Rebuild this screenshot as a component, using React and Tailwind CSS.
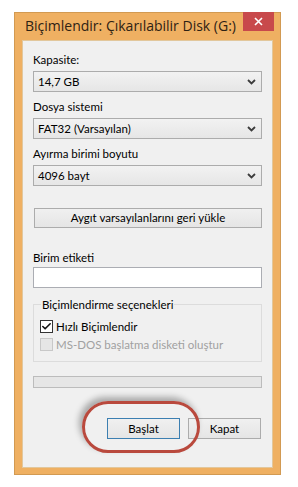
import { Check } from "lucide-react";

const FONT = { fontFamily: 'Lato, "Open Sans", "Liberation Sans", sans-serif' };

const Chevron = () => (
  <svg width="9" height="6" viewBox="0 0 9 6" className="shrink-0">
    <polyline points="1,1 4.5,4.5 8,1" fill="none" stroke="#3c3c3c" strokeWidth="1.8" />
  </svg>
);

const Select = ({ value }) => (
  <div className="h-[21px] flex items-center justify-between border border-[#acacac] bg-gradient-to-b from-[#f2f2f2] to-[#e6e6e6] pl-[4px] pr-[5px]">
    <span>{value}</span>
    <Chevron />
  </div>
);

const Label = ({ children, className = "" }) => (
  <div className={`h-[15px] leading-[15px] ${className}`}>{children}</div>
);

const Btn = ({ children, primary }) => (
  <div
    className={`w-[73px] h-[21px] flex items-center justify-center border bg-gradient-to-b from-[#f0f0f0] to-[#e5e5e5] ${
      primary ? "border-[#3c7fb1]" : "border-[#acacac]"
    }`}
  >
    {children}
  </div>
);

export default function App() {
  return (
    <div className="w-[298px] h-[487px] bg-white pt-[12px] pl-[14px] text-[11.5px] text-black" style={FONT}>
      {/* Window frame */}
      <div className="w-[267px] h-[463px] bg-[#efb062] border border-[#d29a52] flex flex-col">
        {/* Title bar */}
        <div className="h-[27px] flex items-start justify-between">
          <div className="pl-[10px] pt-[4px] text-[14px] leading-[18px] text-[#2e2214] whitespace-nowrap font-['Open_Sans']">
            Biçimlendir: Çıkarılabilir Disk (G:)
          </div>
          <div className="w-[31px] h-[19px] mt-[-1px] mr-[6px] bg-[#c8494b] flex items-center justify-center">
            <svg width="9" height="9" viewBox="0 0 9 9">
              <path d="M1 1 L8 8 M8 1 L1 8" stroke="#fff" strokeWidth="1.6" />
            </svg>
          </div>
        </div>

        {/* Client area */}
        <div className="mx-[7px] h-[428px] bg-[#f0f0f0] border border-[#e2c79c] flex flex-col">
          <div className="px-[10px] pt-[11px] flex flex-col">
            <Label>Kapasite:</Label>
            <div className="mt-[4px]"><Select value="14,7 GB" /></div>

            <Label className="mt-[7px]">Dosya sistemi</Label>
            <div className="mt-[4px]"><Select value="FAT32 (Varsayılan)" /></div>

            <Label className="mt-[7px]">Ayırma birimi boyutu</Label>
            <div className="mt-[4px]"><Select value="4096 bayt" /></div>

            <div className="mt-[22px] ml-[1px] h-[20px] flex items-center justify-center border border-[#acacac] bg-gradient-to-b from-[#f0f0f0] to-[#e5e5e5]">
              Aygıt varsayılanlarını geri yükle
            </div>

            <Label className="mt-[22px]">Birim etiketi</Label>
            <div className="mt-[2px] h-[21px] bg-white border border-[#abadb3]" />

            <fieldset className="mt-[9px] border border-[#dcdcdc] pl-[6px] pb-[9px]">
              <legend className="ml-[1px] px-[1px] leading-[15px]">Biçimlendirme seçenekleri</legend>
              <div className="mt-[7px] h-[15px] flex items-center gap-[3px]">
                <div className="w-[13px] h-[13px] bg-white border border-[#333] flex items-center justify-center">
                  <Check size={11} strokeWidth={3.5} color="#111" />
                </div>
                <span>Hızlı Biçimlendir</span>
              </div>
              <div className="mt-[3px] h-[15px] flex items-center gap-[3px] text-[#a0a0a0]">
                <div className="w-[13px] h-[13px] bg-[#e6e6e6] border border-[#c8c8c8]" />
                <span>MS-DOS başlatma disketi oluştur</span>
              </div>
            </fieldset>

            <div className="mt-[14px] h-[12px] bg-[#e6e6e6] border border-[#bcbcbc]" />
          </div>

          {/* Buttons */}
          <div className="relative mt-[30px] pr-[11px] flex justify-end gap-[8px]">
            <div className="absolute left-[59px] top-[-17px] w-[118px] h-[52px] rounded-full border-[3px] border-[#b9493d] shadow-[-3px_-4px_6px_rgba(0,0,0,0.3)]" />
            <Btn primary>Başlat</Btn>
            <Btn>Kapat</Btn>
          </div>
        </div>
      </div>
    </div>
  );
}
